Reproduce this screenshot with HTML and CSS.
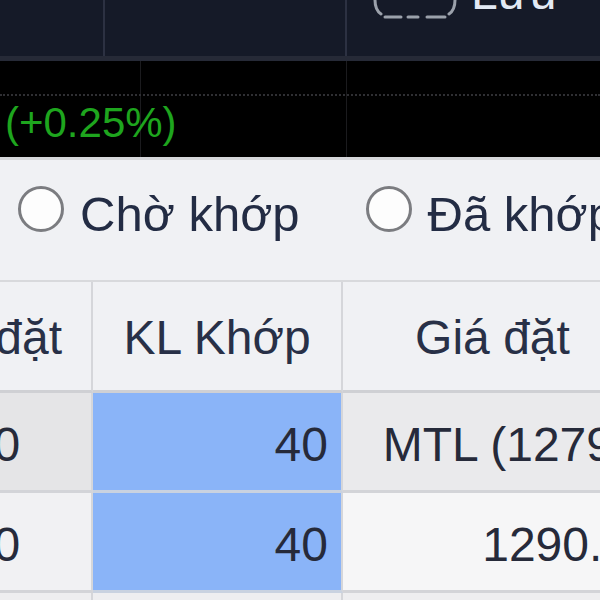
FILE: index.html
```html
<!DOCTYPE html>
<html lang="vi">
<head>
<meta charset="utf-8">
<title>Lệnh</title>
<link rel="stylesheet" href="styles.css">
</head>
<body>
<div class="topbar">
  <div class="tb-cell tb-a"></div>
  <div class="tb-cell tb-b"></div>
  <div class="tb-cell tb-c">
    <svg class="save-ico" width="86" height="20" viewBox="0 0 86 20">
      <path d="M3 0 Q3 10 9 14" fill="none" stroke="#9ba1ab" stroke-width="3" stroke-linecap="round"/>
      <path d="M83 0 Q83 10 77 14" fill="none" stroke="#9ba1ab" stroke-width="3" stroke-linecap="round"/>
      <path d="M13 17 H29 M36 17 H46 M55 17 H73" fill="none" stroke="#9ba1ab" stroke-width="3" stroke-linecap="round"/>
    </svg>
    <span class="save-txt">Lưu</span>
  </div>
</div>
<div class="chart">
  <div class="grid-v gv1"></div>
  <div class="grid-v gv2"></div>
  <div class="dotline"></div>
  <span class="pct">(+0.25%)</span>
</div>
<div class="filters">
  <span class="radio"></span><span class="rlabel">Chờ khớp</span>
  <span class="radio radio-2"></span><span class="rlabel">Đã khớp</span>
</div>
<div class="table">
  <div class="th">KL đặt</div>
  <div class="th">KL Khớp</div>
  <div class="th">Giá đặt</div>

  <div class="td c1 r1">40</div>
  <div class="td c2">40</div>
  <div class="td c3 r1">MTL (1279)</div>

  <div class="td c1 r2">40</div>
  <div class="td c2">40</div>
  <div class="td c3 r2">1290.0</div>

  <div class="td c1 r3"></div>
  <div class="td c2 r3b"></div>
  <div class="td c3 r3"></div>
</div>
</body>
</html>
```
FILE: styles.css
```css
* { box-sizing: border-box; }
html, body { margin: 0; padding: 0; }
body {
  width: 600px;
  height: 600px;
  overflow: hidden;
  background: #f0f1f4;
  font-family: "Liberation Sans", Arial, sans-serif;
  color: #263044;
}

/* top dark bar */
.topbar {
  display: flex;
  height: 61px;
  background: #151a28;
  border-bottom: 5px solid #262a37;
  overflow: hidden;
}
.tb-cell { border-right: 2px solid #2c3142; height: 100%; }
.tb-a { width: 105px; }
.tb-b { width: 242px; }
.tb-c {
  flex: 1;
  border-right: none;
  display: flex;
  align-items: flex-start;
  padding-left: 25px;
}
.save-ico { display: block; flex: none; }
.save-txt {
  margin-left: 13px;
  font-size: 48px;
  line-height: 48px;
  margin-top: -31px;
  color: #e2e9f4;
}

/* black chart strip */
.chart {
  position: relative;
  height: 96px;
  background: #000;
  padding: 41px 0 0 5px;
}
.grid-v {
  position: absolute;
  top: 0;
  bottom: 0;
  width: 1px;
  background: #1b1b1e;
}
.gv1 { left: 140px; }
.gv2 { left: 346px; }
.dotline {
  position: absolute;
  left: 0;
  right: 0;
  top: 33px;
  border-top: 2px dotted #2f2f33;
}
.pct {
  position: relative;
  display: block;
  font-size: 42px;
  line-height: 42px;
  color: #1ea51e;
}

/* radio filters */
.filters {
  height: 123px;
  border-top: 3px solid #d6d7db;
  background: #f0f1f4;
  display: flex;
  align-items: flex-start;
  padding: 26px 0 0 18px;
  white-space: nowrap;
}
.radio {
  flex: none;
  width: 46px;
  height: 46px;
  border-radius: 50%;
  border: 3.5px solid #7b7c80;
  background: #fdfdfd;
}
.radio-2 { margin-left: 66px; }
.rlabel {
  margin-left: 16px;
  margin-top: 4px;
  font-size: 49px;
  line-height: 49px;
  color: #232c44;
}

/* table */
.table {
  margin-left: -104px;
  display: grid;
  grid-template-columns: 197px 250px 301px;
  border-top: 2px solid #d8d9dc;
}
.th, .td {
  font-size: 48px;
  white-space: nowrap;
  overflow: hidden;
  border-right: 2px solid #d5d6da;
}
.th {
  height: 111px;
  padding-top: 4px;
  line-height: 104px;
  text-align: center;
  background: #f0f1f4;
  border-bottom: 3px solid #cfd0d4;
  color: #283047;
}
.td {
  height: 100px;
  padding-top: 8px;
  line-height: 87px;
  border-bottom: 3px solid #d3d4d8;
  color: #262a3a;
}
.c1 { text-align: center; }
.c2 { text-align: right; padding-right: 13px; background: #8ab4f8; border-bottom-color: #c9d2e0; }
.c3 { text-align: right; padding-right: 13px; }
.r1.c1 { background: #e5e5e7; }
.r1.c3 { background: #eaeaec; }
.r2.c1 { background: #f1f1f3; }
.r2.c3 { background: #f6f6f7; }
.r3 { background: #eeeef0; }
.r3b { background: #eeeef0; }
```
